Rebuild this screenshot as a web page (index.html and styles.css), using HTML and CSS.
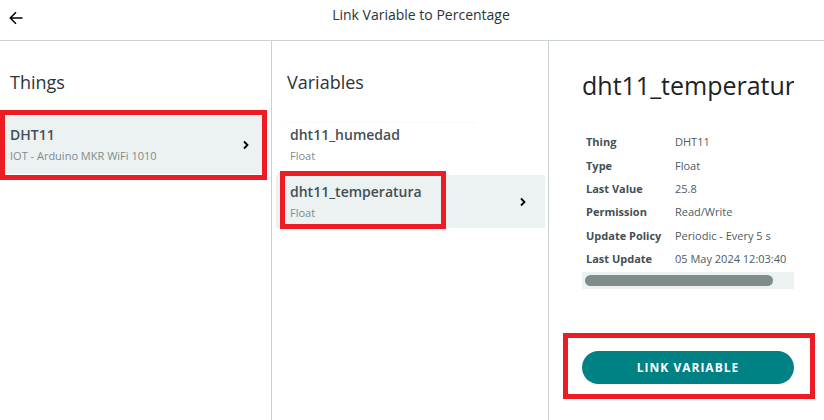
FILE: index.html
```html
<!DOCTYPE html>
<html>
<head>
    <title>Link Variable to Percentage</title>
    <meta http-equiv="Content-Type" content="text/html;charset=utf-8"/>
    <link rel="stylesheet" href="styles.css">
</head>
<body>
<div class="header">
    <span class="back">
        <svg width="14" height="14" viewBox="0 0 14 14"><path d="M13.5 7H1.5M7 1.3L1.3 7 7 12.7" fill="none" stroke="#000" stroke-width="1.5"/></svg>
    </span>
    <span class="title">Link Variable to Percentage</span>
</div>
<div class="main">
    <div class="col things">
        <h2>Things</h2>
        <div class="row active thing">
            <div class="info">
                <div class="name">DHT11</div>
                <div class="sub">IOT - Arduino MKR WiFi 1010</div>
            </div>
            <svg class="chev" width="8" height="10" viewBox="0 0 8 10"><path d="M2 1.5L5.5 5 2 8.5" fill="none" stroke="#000" stroke-width="1.8"/></svg>
        </div>
    </div>
    <div class="col vars">
        <h2>Variables</h2>
        <div class="list">
            <div class="row">
                <div class="info">
                    <div class="name">dht11_humedad</div>
                    <div class="sub">Float</div>
                </div>
            </div>
            <div class="row active">
                <div class="info">
                    <div class="name">dht11_temperatura</div>
                    <div class="sub">Float</div>
                </div>
                <svg class="chev" width="8" height="10" viewBox="0 0 8 10"><path d="M2 1.5L5.5 5 2 8.5" fill="none" stroke="#000" stroke-width="1.8"/></svg>
            </div>
        </div>
    </div>
    <div class="col detail">
        <h1>dht11_temperatura</h1>
        <table class="props">
            <tr><th>Thing</th><td>DHT11</td></tr>
            <tr><th>Type</th><td>Float</td></tr>
            <tr><th>Last Value</th><td>25.8</td></tr>
            <tr><th>Permission</th><td>Read/Write</td></tr>
            <tr><th>Update Policy</th><td>Periodic - Every 5 s</td></tr>
            <tr><th>Last Update</th><td>05 May 2024 12:03:40</td></tr>
        </table>
        <div class="scroll"><div class="thumb"></div></div>
        <button class="link-btn">LINK VARIABLE</button>
    </div>
</div>

<div class="mark mark1"></div>
<div class="mark mark2"></div>
<div class="mark mark3"></div>
</body>
</html>
```

FILE: styles.css
```css
* { box-sizing: border-box; }
body {
    margin: 0;
    padding: 0;
    width: 824px;
    height: 420px;
    overflow: hidden;
    position: relative;
    font-family: "Open Sans", "Noto Sans", sans-serif;
    color: #434f54;
    background: #fff;
}

.header {
    height: 41px;
    border-bottom: 1px solid #c9d2d2;
    display: flex;
    padding: 0 12px 0 9px;
}
.back {
    width: 21px;
    height: 35px;
    display: flex;
    align-items: center;
}
.title {
    flex: 1;
    text-align: center;
    line-height: 30px;
    font-size: 14px;
    color: #2b3439;
}

.main {
    display: flex;
    height: 379px;
}
.col {
    height: 100%;
    padding-top: 29px;
}
.things {
    width: 272px;
    border-right: 1px solid #c9d2d2;
}
.vars {
    width: 277px;
    border-right: 1px solid #c9d2d2;
}
.detail {
    flex: 1;
    padding: 27px 30px 0 33px;
}

h2 {
    margin: 0;
    font-size: 18px;
    line-height: 24px;
    font-weight: 400;
    color: #2b3439;
}
.things h2 { padding-left: 10px; }
.vars h2 { padding-left: 15px; }

.row {
    display: flex;
    align-items: center;
    height: 53px;
    padding: 0 18px 0 14px;
    margin: 0 3px 0 4px;
}
.row.active { background: #ecf1f1; }
.row .info { flex: 1; }
.thing {
    height: 58px;
    margin: 22px 5px 0 3px;
    padding: 0 16px 0 7px;
}
.list {
    margin-top: 24px;
    display: flex;
    flex-direction: column;
    gap: 4px;
}
.list .row:first-child {
    background: linear-gradient(#f6f8f8, #f6f8f8) no-repeat 10px 4px / 190px 1px;
}

.name {
    font-size: 14px;
    line-height: 20px;
    font-weight: 600;
    color: #434f54;
}
.sub {
    font-size: 11px;
    line-height: 18px;
    margin-top: 2px;
    color: #7f8c8d;
}

h1 {
    margin: 0;
    width: 212px;
    overflow: hidden;
    white-space: nowrap;
    font-size: 25px;
    line-height: 34px;
    font-weight: 400;
    color: #1c2326;
}

.props {
    margin-top: 28px;
    border-collapse: collapse;
    font-size: 11px;
}
.props th {
    text-align: left;
    font-weight: 700;
    width: 93px;
    padding: 0 0 0 4px;
    height: 23.4px;
    color: #434f54;
}
.props td {
    padding: 0;
    color: #4e5b61;
    white-space: nowrap;
}

.scroll {
    width: 212px;
    height: 17px;
    margin-top: 2px;
    padding: 3px;
    background: #ecf1f1;
}
.thumb {
    width: 188px;
    height: 11px;
    border-radius: 6px;
    background: #7f8c8c;
}

.link-btn {
    display: block;
    margin-top: 62px;
    width: 212px;
    height: 33px;
    border: 0;
    border-radius: 17px;
    background: #008184;
    color: #fff;
    font-family: "Open Sans", sans-serif;
    font-size: 12px;
    font-weight: 700;
    letter-spacing: 1px;
}

.mark {
    position: absolute;
    border: 5px solid #ed1c24;
}
.mark1 { left: 0; top: 110px; width: 267px; height: 70px; }
.mark2 { left: 280px; top: 171px; width: 166px; height: 58px; }
.mark3 { left: 563px; top: 333px; width: 252px; height: 66px; }
```
